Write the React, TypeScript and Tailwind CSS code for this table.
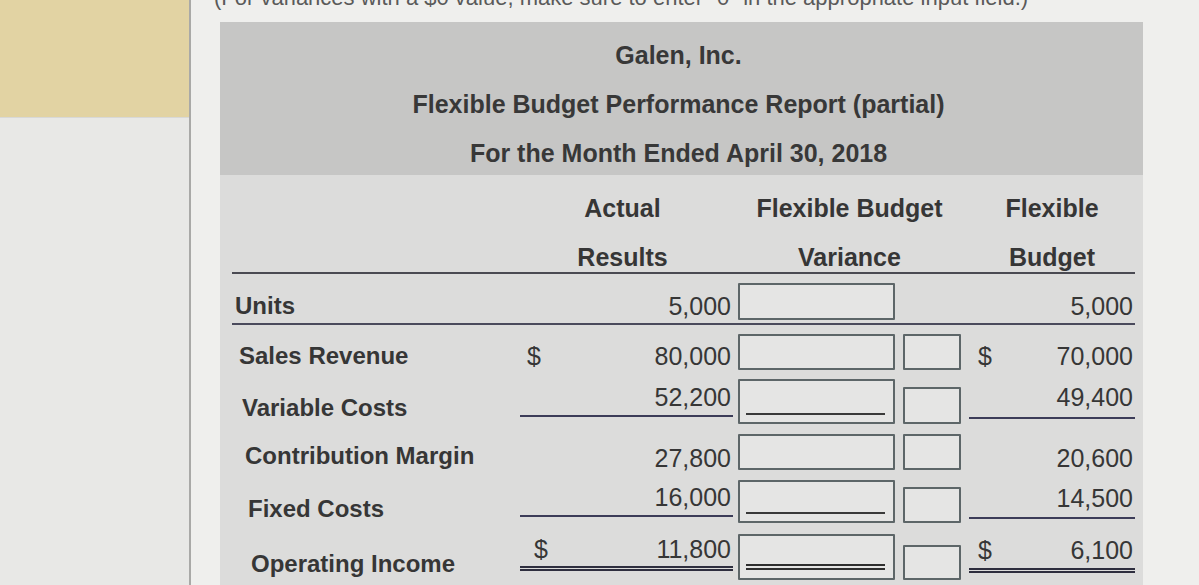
import React from "react";

type Line = "none" | "single" | "double";

function VarBox({ cls, line = "none" }: { cls: string; line?: Line }) {
  return (
    <div className={`relative w-full border-2 border-[#5d6668] bg-[#e5e5e4] rounded-[1px] ${cls}`}>
      {line === "single" && (
        <div className="absolute left-[6px] right-[8px] bottom-[7px] border-b-2 border-[#3a3a3a]" />
      )}
      {line === "double" && (
        <div className="absolute left-[6px] right-[8px] bottom-[8px] h-[6px] border-y-2 border-[#2e2e2e]" />
      )}
    </div>
  );
}

function SmallBox({ cls }: { cls: string }) {
  return <div className={`w-full border-2 border-[#5d6668] bg-[#e5e5e4] rounded-[1px] ${cls}`} />;
}

function Money({
  dollar,
  value,
  line = "none",
  cls = "",
  dpad,
}: {
  dollar?: boolean;
  value: string;
  line?: Line;
  cls?: string;
  dpad: string;
}) {
  const lineCls =
    line === "single"
      ? "border-b-2 border-[#3c3c58]"
      : line === "double"
      ? "border-b-[5px] border-double border-[#2e2e3e]"
      : "";
  return (
    <div className={`flex items-end justify-between text-[25px] leading-[28px] ${lineCls} ${cls}`}>
      <span className={dpad}>{dollar ? "$" : ""}</span>
      <span className="pr-[2px]">{value}</span>
    </div>
  );
}

export default function App() {
  return (
    <div className="w-[1199px] h-[585px] overflow-hidden flex bg-[#efefed] text-[#363636] font-['Liberation_Sans',Arial,Helvetica,sans-serif]">
      {/* left strip */}
      <div className="w-[191px] shrink-0 flex flex-col border-r-2 border-[#a9a9a7]">
        <div className="h-[117px] bg-[#e2d3a3]" />
        <div className="flex-1 bg-[#e8e8e6] border-t border-[#d8d8d6]" />
      </div>

      {/* main */}
      <div className="flex-1 flex flex-col pl-[29px]">
        <p className="-mt-[15px] h-[37px] -ml-[6px] text-[22px] leading-[26px] text-[#5a5a5a] whitespace-nowrap">
          (For variances with a $0 value, make sure to enter "0" in the appropriate input field.)
        </p>

        <div className="w-[923px] flex-1 flex flex-col">
          {/* title band */}
          <div className="h-[153px] bg-[#c6c6c5] pt-[9px] pr-[6px] flex flex-col items-center text-[25px] leading-[49px] font-bold text-[#383838]">
            <div>Galen, Inc.</div>
            <div>Flexible Budget Performance Report (partial)</div>
            <div>For the Month Ended April 30, 2018</div>
          </div>

          {/* body */}
          <div className="flex-1 bg-[#dcdcdb] pl-[12px] pr-[8px] flex flex-col">
            {/* column headers */}
            <div className="border-b-2 border-[#4a4a52] font-bold text-[25px] leading-[28px]">
              <div className="h-[58px] pt-[19px] flex">
                <div className="w-[288px]" />
                <div className="w-[213px] text-center pr-[8px]">Actual</div>
                <div className="w-[5px]" />
                <div className="w-[223px] text-center">Flexible Budget</div>
                <div className="w-[174px] text-center pl-[8px]">Flexible</div>
              </div>
              <div className="h-[39px] pt-[10px] flex">
                <div className="w-[288px]" />
                <div className="w-[213px] text-center pr-[8px]">Results</div>
                <div className="w-[5px]" />
                <div className="w-[223px] text-center">Variance</div>
                <div className="w-[174px] text-center pl-[8px]">Budget</div>
              </div>
            </div>

            {/* Units */}
            <div className="h-[51px] flex items-end pb-[3px] border-b-2 border-[#4a4a5c]">
              <div className="w-[288px] pl-[3px] font-bold text-[24px] leading-[28px]">Units</div>
              <div className="w-[213px]">
                <Money value="5,000" dpad="pl-[7px]" />
              </div>
              <div className="w-[5px]" />
              <div className="w-[157px]">
                <VarBox cls="h-[37px]" />
              </div>
              <div className="w-[8px]" />
              <div className="w-[58px]" />
              <div className="w-[174px]">
                <Money value="5,000" dpad="pl-[17px]" />
              </div>
            </div>

            {/* Sales Revenue */}
            <div className="h-[50px] flex items-end pb-[5px]">
              <div className="w-[288px] pl-[7px] font-bold text-[24px] leading-[28px]">Sales Revenue</div>
              <div className="w-[213px]">
                <Money dollar value="80,000" dpad="pl-[7px]" />
              </div>
              <div className="w-[5px]" />
              <div className="w-[157px]">
                <VarBox cls="h-[36px]" />
              </div>
              <div className="w-[8px]" />
              <div className="w-[58px]">
                <SmallBox cls="h-[36px]" />
              </div>
              <div className="w-[174px]">
                <Money dollar value="70,000" dpad="pl-[17px]" />
              </div>
            </div>

            {/* Variable Costs */}
            <div className="h-[53px] flex items-end pb-[4px]">
              <div className="w-[288px] pl-[10px] font-bold text-[24px] leading-[28px] mb-[2px]">Variable Costs</div>
              <div className="w-[213px] mb-[7px]">
                <Money value="52,200" line="single" cls="pb-[4px]" dpad="pl-[7px]" />
              </div>
              <div className="w-[5px]" />
              <div className="w-[157px]">
                <VarBox cls="h-[45px]" line="single" />
              </div>
              <div className="w-[8px]" />
              <div className="w-[58px]">
                <SmallBox cls="h-[37px]" />
              </div>
              <div className="w-[174px] pl-[8px] mb-[5px]">
                <Money value="49,400" line="single" cls="pb-[6px]" dpad="pl-[9px]" />
              </div>
            </div>

            {/* Contribution Margin */}
            <div className="h-[50px] flex items-end pb-[8px]">
              <div className="w-[288px] pl-[13px] font-bold text-[24px] leading-[28px]">Contribution Margin</div>
              <div className="w-[213px] -mb-[2px]">
                <Money value="27,800" dpad="pl-[7px]" />
              </div>
              <div className="w-[5px]" />
              <div className="w-[157px]">
                <VarBox cls="h-[36px]" />
              </div>
              <div className="w-[8px]" />
              <div className="w-[58px]">
                <SmallBox cls="h-[36px]" />
              </div>
              <div className="w-[174px] -mb-[2px]">
                <Money value="20,600" dpad="pl-[17px]" />
              </div>
            </div>

            {/* Fixed Costs */}
            <div className="h-[50px] flex items-end pb-[5px]">
              <div className="w-[288px] pl-[16px] font-bold text-[24px] leading-[28px]">Fixed Costs</div>
              <div className="w-[213px] mb-[6px]">
                <Money value="16,000" line="single" cls="pb-[4px]" dpad="pl-[7px]" />
              </div>
              <div className="w-[5px]" />
              <div className="w-[157px]">
                <VarBox cls="h-[43px]" line="single" />
              </div>
              <div className="w-[8px]" />
              <div className="w-[58px]">
                <SmallBox cls="h-[36px]" />
              </div>
              <div className="w-[174px] pl-[8px] mb-[4px]">
                <Money value="14,500" line="single" cls="pb-[5px]" dpad="pl-[9px]" />
              </div>
            </div>

            {/* Operating Income */}
            <div className="h-[57px] flex items-end pb-[5px]">
              <div className="w-[288px] pl-[19px] font-bold text-[24px] leading-[28px] mb-[2px]">Operating Income</div>
              <div className="w-[213px] mb-[9px]">
                <Money dollar value="11,800" line="double" cls="pb-[3px]" dpad="pl-[14px]" />
              </div>
              <div className="w-[5px]" />
              <div className="w-[157px]">
                <VarBox cls="h-[46px]" line="double" />
              </div>
              <div className="w-[8px]" />
              <div className="w-[58px]">
                <SmallBox cls="h-[35px]" />
              </div>
              <div className="w-[174px] pl-[8px] mb-[7px]">
                <Money dollar value="6,100" line="double" cls="pb-[4px]" dpad="pl-[9px]" />
              </div>
            </div>
          </div>
        </div>
      </div>
    </div>
  );
}
